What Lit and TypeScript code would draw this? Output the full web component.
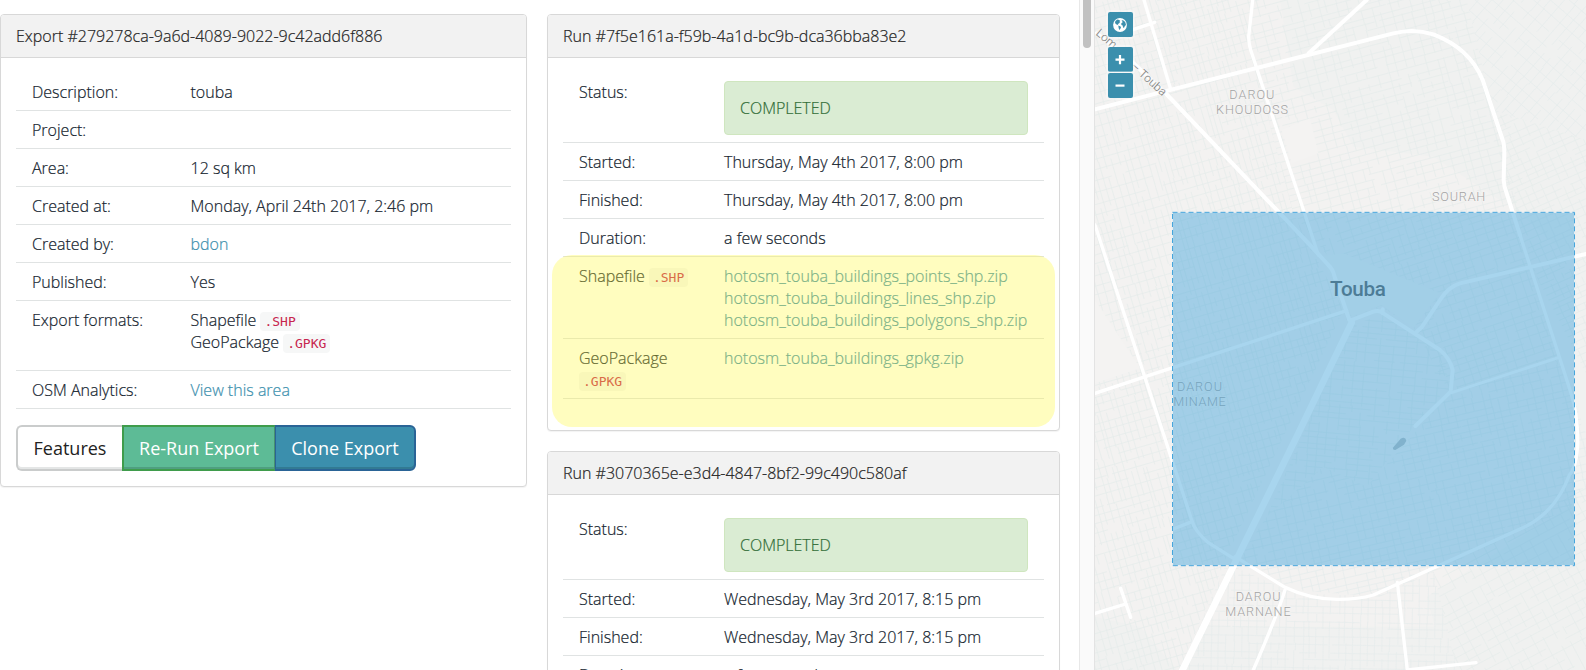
import { LitElement, html, svg, css } from "lit";
import { customElement, property } from "lit/decorators.js";

type Mesh = { clip: string; box: [number, number, number, number]; angle: number; dx: number; dy: number };

/* Street fabric of the town, one entry per district with its own bearing. */
const MESHES: Mesh[] = [
  { clip: "M45 0H520L505 130L640 640L790 930L440 1670L300 2010H45Z", box: [420, 900, 1700, 2400], angle: -16, dx: 18, dy: 27 },
  { clip: "M520 0H1160L1260 420L1320 640H640L505 130Z", box: [900, 400, 1300, 1300], angle: -15, dx: 27, dy: 20 },
  { clip: "M1160 0H1518V420L1240 330Z", box: [1350, 180, 700, 700], angle: 41, dx: 26, dy: 34 },
  { clip: "M1240 330L1518 420V1120L1350 790L1270 540Z", box: [1400, 700, 900, 900], angle: -24, dx: 24, dy: 18 },
  { clip: "M640 640H1300L1440 1080L1110 1180L1000 980L910 925L800 960L770 800Z", box: [1060, 860, 950, 950], angle: -18, dx: 27, dy: 20 },
  { clip: "M810 980L910 940L1090 1060L1110 1180L1000 1280L860 1460L730 1400L560 1550Z", box: [850, 1240, 800, 800], angle: 5, dx: 32, dy: 19 },
  { clip: "M730 1400L860 1460L1110 1180L1440 1080L1518 1300V1500L1350 1580L900 1790L640 1770L480 1670L560 1550Z", box: [1000, 1450, 1200, 1100], angle: -13, dx: 26, dy: 20 },
  { clip: "M440 1690L640 1780L900 1790L1060 1710L1130 2010H300Z", box: [720, 1850, 1000, 500], angle: 1, dx: 20, dy: 22 },
  { clip: "M1060 1710L1350 1580L1518 1450V2010H1130Z", box: [1300, 1760, 800, 800], angle: -28, dx: 30, dy: 25 },
];

const mesh = (m: Mesh, seed: number): string => {
  let s = seed * 7919 + 17;
  const rnd = () => ((s = (s * 16807) % 2147483647) / 2147483647);
  const [, , w, h] = m.box;
  let d = "";
  for (let y = -h / 2; y < h / 2; y += m.dy * (0.8 + rnd() * 0.5)) {
    let x = -w / 2;
    while (x < w / 2) {
      const run = 50 + rnd() * 200;
      d += `M${x.toFixed(0)} ${y.toFixed(0)}h${run.toFixed(0)}`;
      x += run + (rnd() < 0.5 ? rnd() * 70 : 0);
    }
  }
  for (let x = -w / 2; x < w / 2; x += m.dx * (0.8 + rnd() * 0.5)) {
    let y = -h / 2;
    while (y < h / 2) {
      const run = m.dy * (1 + Math.floor(rnd() * 5));
      d += `M${(x + rnd() * 6).toFixed(0)} ${y.toFixed(0)}v${run.toFixed(0)}`;
      y += run + (rnd() < 0.5 ? m.dy : 0);
    }
  }
  return d;
};

@customElement("town-map")
export class TownMap extends LitElement {
  static styles = css`
    :host { display: block; position: relative; overflow: hidden; background: #f3f2f1; }
    .canvas { display: block; width: 491px; height: 670px; }
    .street { fill: none; stroke: #e5eceb; stroke-width: 2; }
    .road { fill: none; stroke: #fff; stroke-linecap: round; stroke-linejoin: round; }
    .w8 { stroke-width: 9; } .w10 { stroke-width: 10; } .w12 { stroke-width: 12; } .w18 { stroke-width: 20; }
    .place { font-family: Roboto, sans-serif; font-size: 38px; fill: #a3a3a3; stroke: #f5f4f3; stroke-width: 5; paint-order: stroke; }
    .city { font-family: Roboto, sans-serif; font-size: 62px; font-weight: 500; fill: #54575a; stroke: #f5f4f3; stroke-width: 5; paint-order: stroke; }
    .roadname { font-family: Roboto, sans-serif; font-size: 35px; fill: #747474; stroke: #f5f4f3; stroke-width: 5; paint-order: stroke; }
    .aoi { fill: rgb(70, 165, 219); fill-opacity: 0.47; }
    .edge { fill: none; stroke: #e6eef2; stroke-width: 3; }
    .dash { fill: none; stroke: #45a5dc; stroke-width: 3; stroke-dasharray: 15 9; }
    .controls { position: absolute; left: 13px; top: 12px; display: flex; flex-direction: column; }
    .ctl { width: 25px; height: 25px; margin-bottom: 1px; padding: 0; border: 0; border-radius: 2px; background: #3b8fad; display: block; box-shadow: 0 0 0 2px rgba(255, 255, 255, 0.35); }
    .globe { margin-bottom: 10px; }
    .glyph { display: block; width: 25px; height: 25px; }
  `;

  render() {
    return html`
      <svg class="canvas" viewBox="45 0 1473 2010" preserveAspectRatio="none">
        <path fill="#f0f1f0" d="M600 0H1518V2010H1100L1040 1790L1500 1500V800L1320 640L1060 470L820 440L760 330L640 260Z" />
        <path fill="#f0f1f0" d="M45 1850L180 1880L290 2010H45ZM380 1880H1100V2010H300Z" />
        <defs>${MESHES.map((m, i) => svg`<clipPath id=${"d" + i}><path d=${m.clip} /></clipPath>`)}</defs>
        ${MESHES.map((m, i) => svg`<g clip-path=${`url(#d${i})`}><path class="street" d=${mesh(m, i + 1)} transform=${`translate(${m.box[0]} ${m.box[1]}) rotate(${m.angle})`} /></g>`)}
        <path fill="#f4f3f2" d="M45 900L165 1080L180 1105L45 1150ZM605 390L690 355L715 460L635 490Z" />
        <path fill="#f3f3f2" d="M720 770L790 760L1080 880L1000 985L905 915L815 950Z" />
        <g class="road">
          <path class="w10" d="M192 0L272 268M150 92L224 67" />
          <path class="w12" d="M45 328L230 280L940 100Q1000 84 1060 103Q1170 145 1208 240L1268 420Q1273 430 1273 460L1271 540Q1272 560 1280 580L1320 705" />
          <path class="w10" d="M1320 705L1470 1170Q1494 1240 1493 1330Q1490 1400 1468 1425Q1430 1530 1340 1578L880 1785Q830 1799 770 1798Q690 1798 615 1762L465 1670" />
          <path class="w10" d="M518 0L506 110Q506 130 512 150L530 205L715 765" />
          <path class="w12" d="M860 0L686 160" />
          <path class="w12" d="M50 100L150 180L262 285L690 735L745 795Q760 810 763 828L808 960" />
          <path class="w10" d="M45 675L335 1560Q345 1595 385 1628L465 1678" />
          <path class="w10" d="M45 1180L196 1130L800 932M280 1587L336 1565" />
          <path class="w18" d="M815 968L655 1300L300 2025" />
          <path class="w12" d="M815 960L880 935Q900 930 910 940L1080 1050Q1110 1075 1118 1110L1112 1175L1006 1278M908 928V940" />
          <path class="w12" d="M1010 995L1025 982L1080 900Q1105 860 1140 850L1518 762" />
          <path class="w8" d="M1115 1178L1435 1073" />
          <path class="w10" d="M615 1770Q590 1850 520 2010M952 1747L982 2010L1188 1988M122 1765L152 1852M45 1840L137 1812" />
        </g>
        <path fill="#b5bdc1" d="M940 1342L962 1316Q976 1308 979 1322L972 1334L946 1350Q936 1350 940 1342Z" />
        <text class="place" x="448" y="297" textLength="135">DAROU</text>
        <text class="place" x="408" y="342" textLength="216">KHOUDOSS</text>
        <text class="place" x="1056" y="602" textLength="160">SOURAH</text>
        <text class="place" x="291" y="1173" textLength="135">DAROU</text>
        <text class="place" x="280" y="1218" textLength="157">MINAME</text>
        <text class="place" x="467" y="1803" textLength="135">DAROU</text>
        <text class="place" x="436" y="1848" textLength="196">MARNANE</text>
        <text class="city" x="750" y="887" textLength="168">Touba</text>
        <text class="roadname" transform="translate(46 103) rotate(40)">Lom…</text>
        <text class="roadname" transform="translate(151 203) rotate(42)" textLength="129">– Touba</text>
        <rect class="aoi" x="277" y="636" width="1207" height="1060" />
        <rect class="edge" x="277.500" y="637" width="1206" height="1060" />
        <rect class="dash" x="277.500" y="637" width="1206" height="1060" />
      </svg>
      <div class="controls">
        <button class="ctl globe" aria-label="World">
          <svg class="glyph" viewBox="0 0 25 25">
            <circle cx="12" cy="13" r="6.900" fill="#fff" />
            <path fill="#3b8fad" d="M7.400 9L9.400 7.600L11.200 7.900L12.300 9L11.300 9.900L12 10.800L10.600 11.500L9.600 12.900L8.200 12.200L7 11ZM10.300 13.600L12.600 14.500L13 15.600L12.200 17L11.400 18L10.700 16.200ZM13.600 8.100L16 8.700L17.400 10.600L18 13L16.900 14L15.900 16L15 15.200L14.700 13.400L13.400 12.900L13.300 11.300L14.700 10.300Z" />
          </svg>
        </button>
        <button class="ctl" aria-label="Zoom in">
          <svg class="glyph" viewBox="0 0 25 25"><path fill="#fff" d="M7.500 11.500h3.400V8h2.200v3.500h3.400v2.200h-3.400v3.500h-2.200v-3.500H7.500z" /></svg>
        </button>
        <button class="ctl" aria-label="Zoom out">
          <svg class="glyph" viewBox="0 0 25 25"><path fill="#fff" d="M7.500 11.500h9v2.200h-9z" /></svg>
        </button>
      </div>
    `;
  }
}

const panelStyles = css`
  :host { display: block; }
  .panel { border: 1px solid #d8d8d8; border-radius: 4px; background: #fff; box-shadow: 0 1px 1px rgba(0, 0, 0, 0.05); box-sizing: border-box; -webkit-text-stroke: 0.2px; }
  .head { height: 43px; box-sizing: border-box; padding: 10px 15px; background: #f2f2f2; border-bottom: 1px solid #d8d8d8; border-radius: 3px 3px 0 0; line-height: 22px; color: #222; white-space: nowrap; }
  .body { padding: 15px; }
  .row { display: grid; box-sizing: border-box; padding: 8px 16px 7px; border-bottom: 1px solid #e0e3e3; line-height: 22px; min-height: 38px; }
  .link { color: #3b8fad; text-decoration: none; }
  .code { font: 400 13px/17px "DejaVu Sans Mono", monospace; color: #c7254e; background: #f6f7f7; border-radius: 4px; padding: 2px 4px; -webkit-text-stroke: 0; }
`;

@customElement("export-panel")
export class ExportPanel extends LitElement {
  static styles = [panelStyles, css`
    .row { grid-template-columns: 158.500px 1fr; }
    .formats { padding-bottom: 17px; }
    .group { display: flex; margin-top: 16px; height: 46px; -webkit-text-stroke: 0; }
    .btn { box-sizing: border-box; padding: 0 0 1px; font: 400 18px/24px "Open Sans", sans-serif; border: 1px solid; color: #fff; }
    .features { width: 106px; border: 2px solid #cacccc; border-right: 0; border-radius: 6px 0 0 6px; background: #fff; color: #222; box-shadow: inset 0 -2px 0 #e4e6e6; }
    .rerun { width: 153px; border: 2px solid #3f9c4c; border-right: 1px solid #46906f; background: #5dbb96; box-shadow: inset 0 -2px 0 #4f9f80; }
    .clone { width: 141px; border: 2px solid #2a6496; border-left-width: 1px; border-radius: 0 6px 6px 0; background: #3b8fad; box-shadow: inset 0 -2px 0 #327a93; }
  `];

  render() {
    return html`
      <section class="panel">
        <div class="head">Export #279278ca-9a6d-4089-9022-9c42add6f886</div>
        <div class="body">
          <div class="row"><span>Description:</span><span>touba</span></div>
          <div class="row"><span>Project:</span><span></span></div>
          <div class="row"><span>Area:</span><span>12 sq km</span></div>
          <div class="row"><span>Created at:</span><span>Monday, April 24th 2017, 2:46 pm</span></div>
          <div class="row"><span>Created by:</span><a class="link">bdon</a></div>
          <div class="row"><span>Published:</span><span>Yes</span></div>
          <div class="row formats">
            <span>Export formats:</span>
            <div>
              <div>Shapefile <code class="code">.SHP</code></div>
              <div>GeoPackage <code class="code">.GPKG</code></div>
            </div>
          </div>
          <div class="row"><span>OSM Analytics:</span><a class="link">View this area</a></div>
          <div class="group">
            <button class="btn features">Features</button>
            <button class="btn rerun">Re-Run Export</button>
            <button class="btn clone">Clone Export</button>
          </div>
        </div>
      </section>
    `;
  }
}

@customElement("run-panel")
export class RunPanel extends LitElement {
  @property() uid = "";
  @property() when = "";
  @property({ type: Boolean }) marked = false;

  static styles = [panelStyles, css`
    :host { position: relative; }
    .row { grid-template-columns: 145px 1fr; }
    .body { padding-bottom: 31px; }
    .status { box-sizing: border-box; height: 54px; padding: 15px; border: 1px solid #cfe6bf; border-radius: 4px; background: #daecd3; color: #2f6b35; }
    .files { display: flex; flex-direction: column; white-space: nowrap; }
    .marker { position: absolute; left: 5px; right: 5px; top: 241px; bottom: 4px; border-radius: 20px; background: rgba(255, 249, 60, 0.33); }
  `];

  render() {
    return html`
      <section class="panel">
        <div class="head">Run #${this.uid}</div>
        <div class="body">
          <div class="row"><span>Status:</span><div class="status">COMPLETED</div></div>
          <div class="row"><span>Started:</span><span>${this.when}</span></div>
          <div class="row"><span>Finished:</span><span>${this.when}</span></div>
          <div class="row"><span>Duration:</span><span>a few seconds</span></div>
          ${this.marked ? html`
            <div class="row">
              <span>Shapefile <code class="code">.SHP</code></span>
              <div class="files">
                <a class="link">hotosm_touba_buildings_points_shp.zip</a>
                <a class="link">hotosm_touba_buildings_lines_shp.zip</a>
                <a class="link">hotosm_touba_buildings_polygons_shp.zip</a>
              </div>
            </div>
            <div class="row">
              <span>GeoPackage<br /><code class="code">.GPKG</code></span>
              <div class="files"><a class="link">hotosm_touba_buildings_gpkg.zip</a></div>
            </div>` : null}
        </div>
      </section>
      ${this.marked ? html`<div class="marker"></div>` : null}
    `;
  }
}

@customElement("app-root")
export class AppRoot extends LitElement {
  static styles = css`
    :host { display: block; height: 670px; overflow: hidden; background: #fff; font: 300 16px/22px "Open Sans", sans-serif; color: #14232e; }
    .page { display: grid; grid-template-columns: 527px 20px 513px 19px 16px 491px; height: 670px; }
    .left { grid-column: 1; padding-top: 14px; }
    .runs { grid-column: 3; padding-top: 14px; display: flex; flex-direction: column; gap: 20px; }
    .scroll { grid-column: 5; box-sizing: border-box; padding-left: 3px; background: #fafafa; border-left: 1px solid #e8e8e8; border-right: 1px solid #e3e3e3; }
    .thumb { width: 8px; height: 48px; border-radius: 0 0 4px 4px; background: #c1c1c1; }
    .map { grid-column: 6; }
  `;

  render() {
    return html`
      <main class="page">
        <div class="left"><export-panel></export-panel></div>
        <div class="runs">
          <run-panel uid="7f5e161a-f59b-4a1d-bc9b-dca36bba83e2" when="Thursday, May 4th 2017, 8:00 pm" marked></run-panel>
          <run-panel uid="3070365e-e3d4-4847-8bf2-99c490c580af" when="Wednesday, May 3rd 2017, 8:15 pm"></run-panel>
        </div>
        <div class="scroll"><div class="thumb"></div></div>
        <town-map class="map"></town-map>
      </main>
    `;
  }
}
